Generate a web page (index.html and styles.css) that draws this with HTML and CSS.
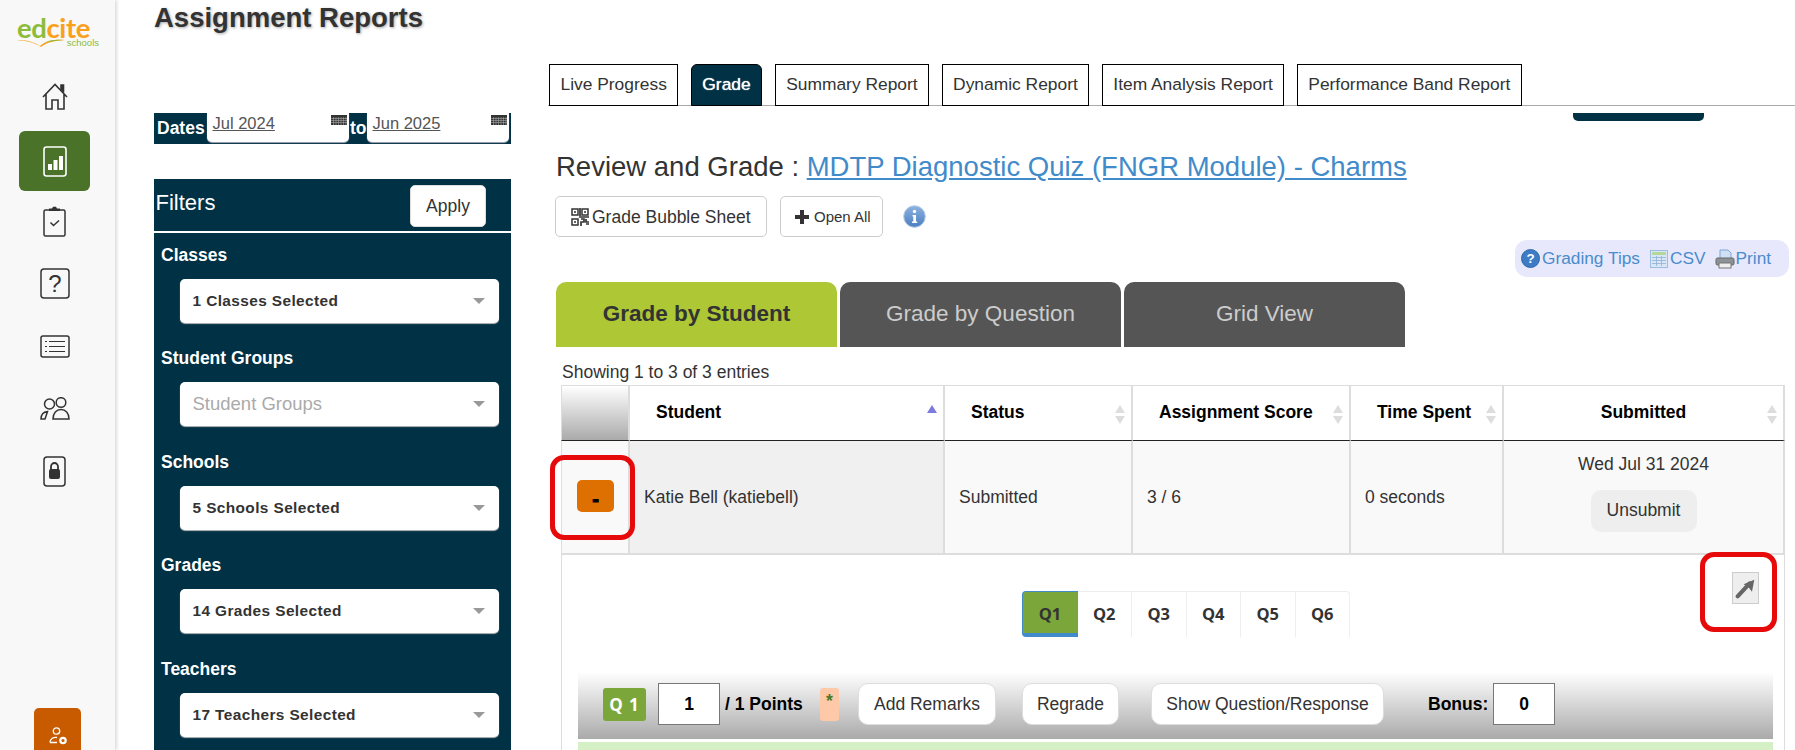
FILE: index.html
```html
<!DOCTYPE html>
<html lang="en">
<head>
<meta charset="utf-8">
<title>Assignment Reports</title>
<link rel="stylesheet" href="styles.css">
</head>
<body>
<svg class="defs" width="0" height="0" aria-hidden="true">
  <symbol id="cal" viewBox="0 0 16 10">
    <rect width="16" height="10" fill="#333"/>
    <path d="M0 3.5h16M0 5.5h16M0 7.5h16M2.5 2v8M5 2v8M7.500 2v8M10 2v8M12.500 2v8M15 2v8" stroke="#aaa" stroke-width=".6" fill="none"/>
  </symbol>
</svg>
<aside class="sidebar">
  <div class="logo">
    <div class="logo-word"><span class="logo-ed">ed</span><span class="logo-cite">cite</span></div>
    <div class="logo-foot">
      <svg class="logo-book" viewBox="0 0 48 8"><path d="M0 1c8 0 16 1 23 6C28 2 38 0 48 1 38 2 30 3 24 8 17 3 8 2 0 1z" fill="#f9a11b"/><path d="M26 4c6-3 13-4 20-3-7 1-14 1-20 3z" fill="#8dbb3a"/></svg>
      <span class="logo-schools">schools</span>
    </div>
  </div>
  <svg class="nav-icon nav-home" viewBox="0 0 26 27" fill="none" stroke="#333" stroke-width="1.6"><path d="M1 14 13 1.500 25 14M4 11v15h6V17h6v9h6V11"/><path d="M19 7V2h2.500v7.500" fill="#333"/></svg>
  <div class="nav-active">
    <svg class="nav-icon-chart" viewBox="0 0 24 31" fill="none"><rect x="1" y="1" width="22" height="29" rx="2.500" stroke="#fff" stroke-width="1.600"/><rect x="5" y="18" width="4" height="6" fill="#fff"/><rect x="10.500" y="14" width="4" height="10" fill="#fff"/><rect x="16" y="10" width="4" height="14" fill="#fff"/></svg>
  </div>
  <svg class="nav-icon nav-clip" viewBox="0 0 23 31" fill="none" stroke="#333" stroke-width="1.500"><path d="M6 4H2.500C1.500 4 1 4.500 1 5.500V28.500C1 29.500 1.500 30 2.500 30H20.500C21.500 30 22 29.500 22 28.500V5.500C22 4.500 21.500 4 20.500 4H17"/><path d="M6 5V2.500h3L10 .8h3l1 1.700h3V5z" fill="#333" stroke="none"/><path d="m7.500 16.500 3 3 5.500-5"/></svg>
  <svg class="nav-icon nav-q" viewBox="0 0 30 31" fill="none"><rect x="1" y="1" width="28" height="29" rx="3" stroke="#333" stroke-width="1.500"/><text x="15" y="24" text-anchor="middle" class="nav-q-mark">?</text></svg>
  <svg class="nav-icon nav-list" viewBox="0 0 30 23" fill="none" stroke="#333"><rect x="1" y="1" width="28" height="21" rx="2" stroke-width="1.500"/><path d="M9 6.500h16M9 11.500h16M9 16.500h16M5 6.500h2M5 11.500h2M5 16.500h2" stroke-width="1.200"/></svg>
  <svg class="nav-icon nav-people" viewBox="0 0 30 23" fill="none" stroke="#333" stroke-width="1.500"><circle cx="9.500" cy="7" r="5"/><circle cx="21" cy="5.500" r="4.800"/><path d="M13 22c0-6 3.500-9.500 8-9.500s8 3.500 8 9.500zM1 22c0-4 2-7 6.500-7.500L5 22z"/></svg>
  <svg class="nav-icon nav-lock" viewBox="0 0 23 31" fill="none"><rect x="1" y="1" width="21" height="29" rx="3" stroke="#333" stroke-width="1.500"/><rect x="6" y="13" width="11" height="10" rx="2" fill="#333"/><path d="M8 14v-3.500a3.500 3.500 0 0 1 7 0V14" stroke="#333" stroke-width="1.800"/></svg>
  <div class="nav-user">
    <svg class="nav-user-icon" viewBox="0 0 18 18" fill="none" stroke="#fff" stroke-width="1.300"><circle cx="7.500" cy="4" r="3.200"/><path d="M1 15.500c0-3.500 3-5.500 7-5M1 15.500h7"/><circle cx="14" cy="13.500" r="2.700" stroke-width="2.200"/></svg>
  </div>
</aside>

<main class="main">
  <section class="left">
    <h1 class="page-title">Assignment Reports</h1>
    <div class="dates">
      <b class="dates-label">Dates</b>
      <div class="date-input"><span class="date-value">Jul 2024</span><svg class="cal"><use href="#cal"/></svg></div>
      <b class="dates-to">to</b>
      <div class="date-input"><span class="date-value">Jun 2025</span><svg class="cal"><use href="#cal"/></svg></div>
    </div>
    <div class="filters">
      <div class="filters-head"><span class="filters-title">Filters</span><button class="apply">Apply</button></div>
      <div class="field"><label class="field-label">Classes</label><div class="select">1 Classes Selected</div></div>
      <div class="field"><label class="field-label">Student Groups</label><div class="select select-empty">Student Groups</div></div>
      <div class="field"><label class="field-label">Schools</label><div class="select">5 Schools Selected</div></div>
      <div class="field"><label class="field-label">Grades</label><div class="select">14 Grades Selected</div></div>
      <div class="field"><label class="field-label">Teachers</label><div class="select">17 Teachers Selected</div></div>
    </div>
  </section>

  <section class="right">
    <nav class="tabs">
      <a class="tab">Live Progress</a>
      <a class="tab tab-on">Grade</a>
      <a class="tab">Summary Report</a>
      <a class="tab">Dynamic Report</a>
      <a class="tab">Item Analysis Report</a>
      <a class="tab">Performance Band Report</a>
    </nav>
    <div class="stub"></div>
    <h2 class="review">Review and Grade : <a class="review-link">MDTP Diagnostic Quiz (FNGR Module) - Charms</a></h2>
    <div class="actions">
      <button class="act act-bubble">
        <svg class="qr" viewBox="0 0 18 18" fill="none" stroke="#333" stroke-width="1.500"><rect x="1" y="1" width="6" height="6"/><rect x="11" y="1" width="6" height="6"/><rect x="1" y="11" width="6" height="6"/><path d="M3 3.200h2v1.600H3zM13 3.200h2v1.600h-2zM3 13.200h2v1.600H3z" fill="#333" stroke="none"/><path d="M9 0v8M8 9h10M10 11h3v3h-3v4M15 11v3h3M15 16h3" stroke-width="1.700"/></svg>
        Grade Bubble Sheet
      </button>
      <button class="act act-open"><span class="plus"></span>Open All</button>
      <svg class="info" viewBox="0 0 23 23"><defs><linearGradient id="ig" x1="0" y1="0" x2="0" y2="1"><stop offset="0" stop-color="#8db3e0"/><stop offset="1" stop-color="#4a7fc0"/></linearGradient></defs><circle cx="11.500" cy="11.500" r="10.800" fill="url(#ig)" stroke="#b9cde6"/><circle cx="11.500" cy="6.500" r="1.700" fill="#fff"/><path d="M9.500 10h3.500v6.500h1.200V18H9v-1.500h1.300v-5H9.500z" fill="#fff"/></svg>
    </div>
    <div class="tools-row">
      <div class="tools">
        <svg class="tool-help" viewBox="0 0 20 20"><circle cx="10" cy="10" r="9.500" fill="#3d7cc4" stroke="#2f68ab"/><text x="10" y="15" text-anchor="middle" class="tool-help-mark">?</text></svg>
        <a class="tool-link">Grading Tips</a>
        <svg class="tool-csv" viewBox="0 0 18 18"><rect x=".5" y=".5" width="17" height="17" fill="#d8e6f5" stroke="#9dbde0"/><rect x="2" y="2" width="14" height="3" fill="#b6d79a"/><path d="M2 7.500h14M2 10.500h14M2 13.500h14M6.500 6v10M11.500 6v10" stroke="#8fb0d4" stroke-width=".8"/></svg>
        <a class="tool-link">CSV</a>
        <svg class="tool-print" viewBox="0 0 20 20"><path d="M5 1h8l3 3v6H5z" fill="#cfe0f4" stroke="#7fa5d3"/><rect x="1" y="9" width="18" height="7" rx="1.500" fill="#8d9296" stroke="#666"/><rect x="4" y="14" width="12" height="5" fill="#eee" stroke="#777"/></svg>
        <a class="tool-link">Print</a>
      </div>
    </div>
    <div class="grade-tabs">
      <a class="gtab gtab-on">Grade by Student</a>
      <a class="gtab">Grade by Question</a>
      <a class="gtab">Grid View</a>
    </div>
    <p class="showing">Showing 1 to 3 of 3 entries</p>

    <div class="report">
      <table class="report-table">
        <thead>
          <tr>
            <th class="c-toggle th-toggle"></th>
            <th class="c-student"><span class="th-text">Student</span><i class="sort sort-asc"></i></th>
            <th class="c-status"><span class="th-text">Status</span><i class="sort"></i></th>
            <th class="c-score"><span class="th-text">Assignment Score</span><i class="sort"></i></th>
            <th class="c-time"><span class="th-text">Time Spent</span><i class="sort"></i></th>
            <th class="c-sub th-center">Submitted<i class="sort"></i></th>
          </tr>
        </thead>
        <tbody>
          <tr>
            <td class="td-toggle"><button class="toggle">-</button></td>
            <td class="td-student">Katie Bell (katiebell)</td>
            <td>Submitted</td>
            <td>3 / 6</td>
            <td>0 seconds</td>
            <td class="td-sub"><div class="sub-date">Wed Jul 31 2024</div><button class="unsubmit">Unsubmit</button></td>
          </tr>
        </tbody>
      </table>
      <div class="expanded">
        <div class="qtabs">
          <a class="qtab qtab-on">Q1</a><a class="qtab">Q2</a><a class="qtab">Q3</a><a class="qtab">Q4</a><a class="qtab">Q5</a><a class="qtab">Q6</a>
        </div>
        <div class="gradebar">
          <span class="q-badge">Q 1</span>
          <span class="score-box">1</span>
          <b class="points">/ 1 Points</b>
          <span class="star">*</span>
          <button class="pill pill-add">Add Remarks</button>
          <button class="pill pill-regrade">Regrade</button>
          <button class="pill pill-show">Show Question/Response</button>
          <b class="bonus-label">Bonus:</b>
          <span class="score-box bonus-box">0</span>
        </div>
        <div class="green-strip"></div>
        <button class="popout"><svg viewBox="0 0 27 32" class="popout-icon"><path d="M5 25 18 11" stroke="#666" stroke-width="4.500" stroke-linecap="round"/><path d="M23 7 20.500 20 17 15.500 11.500 12z" fill="#666"/></svg></button>
      </div>
      <div class="mark mark-toggle"></div>
      <div class="mark mark-popout"></div>
    </div>
  </section>
</main>
</body>
</html>
```

FILE: styles.css
```css
* { box-sizing: border-box; }
html, body { margin: 0; height: 750px; overflow: hidden; }
body {
  display: flex;
  background: #fff;
  color: #333;
  font: 17.5px/20px "Liberation Sans", Arial, sans-serif;
}
button { font: inherit; color: inherit; cursor: pointer; }
.defs { position: absolute; }

/* sidebar */
.sidebar {
  flex: 0 0 115px;
  height: 750px;
  display: flex;
  flex-direction: column;
  align-items: center;
  padding: 15px 6px 0 0;
  background: #f8f8f8;
  box-shadow: 2px 0 3px #ddd;
  overflow: hidden;
}
.logo { flex: none; width: 82px; height: 32px; margin-left: 7px; }
.logo-word { height: 25px; font: 700 27.500px/25px Lato, sans-serif; letter-spacing: -.4px; white-space: nowrap; }
.logo-ed { color: #8dbb3a; }
.logo-cite { color: #f9a11b; }
.logo-foot { display: flex; align-items: flex-end; justify-content: space-between; height: 7px; }
.logo-book { width: 48px; height: 8px; }
.logo-schools { font: 9.500px/9px "Liberation Sans", sans-serif; color: #8dbb3a; }
.nav-icon { display: block; flex: none; }
.nav-home { width: 26px; height: 27px; margin-top: 36px; }
.nav-active {
  flex: none;
  width: 71px;
  height: 60px;
  margin-top: 21px;
  display: flex;
  align-items: center;
  justify-content: center;
  background: #4a7229;
  border-radius: 6px;
}
.nav-icon-chart { width: 24px; height: 31px; }
.nav-clip { width: 23px; height: 31px; margin-top: 15px; }
.nav-q { width: 30px; height: 31px; margin-top: 31px; }
.nav-q-mark { font: 24px "Liberation Sans", sans-serif; fill: #333; }
.nav-list { width: 30px; height: 23px; margin-top: 36px; }
.nav-people { width: 30px; height: 23px; margin-top: 39px; }
.nav-lock { width: 23px; height: 31px; margin-top: 36px; }
.nav-user {
  flex: none;
  width: 47px;
  height: 42px;
  margin: auto 0 0 6px;
  padding: 19px 0 0 15px;
  background: #c85a00;
  border-radius: 5px 5px 0 0;
}
.nav-user-icon { display: block; width: 18px; height: 18px; }

/* main */
.main { flex: 1; display: flex; min-width: 0; height: 750px; padding-left: 39px; }
.left { display: flex; flex-direction: column; flex: 0 0 357px; height: 750px; }
.right { flex: 1; min-width: 0; height: 750px; margin-left: 37px; }

.page-title {
  margin: 0;
  font-size: 27.500px;
  line-height: 36px;
  font-weight: 700;
  text-shadow: 1px 1px 3px #aaa;
}
.dates {
  display: flex;
  flex: none;
  height: 31px;
  margin-top: 77px;
  padding-right: 2px;
  background: #003145;
  color: #fff;
}
.dates-label { width: 53px; padding: 5px 0 0 3px; }
.dates-to { width: 18px; padding: 5px 0 0 1px; }
.date-input {
  display: flex;
  justify-content: space-between;
  width: 142px;
  height: 28.500px;
  padding: 0 2px 0 5.500px;
  background: #fff;
  border-radius: 0 0 5px 5px;
  box-shadow: 0 1px 1px #aab;
  color: #555;
  font-size: 16.500px;
}
.date-value { text-decoration: underline; }
.cal { width: 16px; height: 10px; margin-top: 2px; }

.filters { flex: 1; min-height: 0; margin-top: 35px; background: #003145; color: #fff; }
.filters-head {
  display: flex;
  align-items: center;
  justify-content: space-between;
  height: 54px;
  padding: 0 25px 0 1.500px;
  border-bottom: 2px solid #fff;
}
.filters-title { margin-bottom: 5px; font-size: 22px; line-height: 30px; }
.apply {
  width: 76px;
  height: 42px;
  margin-top: 2px;
  padding: 0;
  background: #fff;
  border: 1px solid #ddd;
  border-radius: 5px;
  color: #333;
}
.field { padding: 12px 12.500px 13.400px 7px; }
.field:last-child { padding-bottom: 0; }
.field-label { display: block; font-weight: 700; line-height: 20px; }
.select {
  position: relative;
  height: 44px;
  margin: 14px 0 0 18.500px;
  padding-left: 13px;
  background: #fff;
  border-radius: 5px;
  box-shadow: 0 1px 1px #bbb;
  color: #333;
  font-size: 15.400px;
  font-weight: 700;
  letter-spacing: .4px;
  line-height: 43px;
}
.select::after {
  content: "";
  position: absolute;
  right: 13.500px;
  top: 19px;
  border: solid transparent;
  border-width: 6px 6px 0;
  border-top-color: #999;
}
.select-empty { color: #aaa; font-size: 18.500px; font-weight: 400; letter-spacing: 0; }

/* tabs */
.tabs {
  display: flex;
  gap: 12.500px;
  height: 42px;
  margin-top: 64px;
  padding-left: 1px;
  border-bottom: 1px solid #aaa;
  font-size: 17.400px;
}
.tab {
  height: 42px;
  padding: 9px 10.500px 0;
  background: #fff;
  border: 1px solid #000;
}
.tab-on {
  background: #003145;
  border-radius: 6px 6px 0 0;
  color: #fff;
  text-shadow: 0 0 1px #fff;
}
.stub {
  width: 131px;
  height: 8px;
  margin: 7px 0 0 1025px;
  background: #003145;
  border-radius: 0 0 5px 5px;
}
.review {
  margin: 26px 0 0 8px;
  font-size: 27.500px;
  font-weight: 400;
  line-height: 40px;
}
.review-link { color: #428bca; text-decoration: underline; }
.actions { display: flex; align-items: center; height: 41px; margin: 9px 0 0 7px; }
.act {
  display: flex;
  align-items: center;
  height: 41px;
  padding: 0;
  background: #fff;
  border: 1px solid #ccc;
  border-radius: 5px;
}
.act-bubble { width: 212px; padding-left: 15px; gap: 3px; }
.act-open { width: 103px; margin-left: 13px; padding-left: 14px; font-size: 15px; }
.qr { width: 18px; height: 18px; }
.plus {
  width: 14px;
  height: 14px;
  margin-right: 5px;
  background:
    linear-gradient(#333, #333) center / 14px 4px no-repeat,
    linear-gradient(#333, #333) center / 4px 14px no-repeat;
}
.info { width: 23px; height: 23px; margin-left: 20px; }
.tools-row { display: flex; justify-content: flex-end; margin: 3px 6px 0 0; }
.tools {
  display: flex;
  align-items: center;
  width: 274px;
  height: 37px;
  padding: 0 0 1px 6px;
  background: #e8e8fc;
  border-radius: 12px;
  font-size: 17.300px;
}
.tool-link { color: #4a8ccc; }
.tool-help { width: 19px; height: 19px; margin: 1px 2px 0 0; }
.tool-help-mark { font: 700 14px "Liberation Sans", sans-serif; fill: #fff; }
.tool-csv { width: 18px; height: 18px; margin: 1px 2px 0 10px; }
.tool-print { width: 20px; height: 20px; margin: 1px 1px 0 9px; }

.grade-tabs { display: flex; gap: 3px; margin: 5px 0 0 8px; }
.gtab {
  width: 281px;
  height: 65px;
  background: #555;
  border-radius: 10px 10px 0 0;
  color: #ccc;
  font-size: 22.500px;
  line-height: 64px;
  text-align: center;
}
.gtab-on { background: #aec735; color: #333; font-weight: 700; }
.showing { margin: 15px 0 0 14px; line-height: 20px; }

/* table */
.report { position: relative; width: 1224px; margin: 3px 0 0 13px; }
.report-table { width: 1224px; table-layout: fixed; border-collapse: separate; border-spacing: 0; }
.c-toggle { width: 69px; }
.c-student { width: 315px; }
.c-status { width: 188px; }
.c-score { width: 218px; }
.c-time { width: 153px; }
.c-sub { width: 281px; }
.report-table th {
  position: relative;
  height: 56px;
  padding: 0 0 2px 26px;
  border-top: 1px solid #ddd;
  border-right: 2px solid #ddd;
  border-bottom: 1px solid #222;
  color: #000;
  font-weight: 700;
  text-align: left;
}
.report-table .th-toggle {
  padding: 0;
  border-left: 1px solid #ddd;
  background: linear-gradient(#fff, #aaa);
}
.report-table .th-center { padding-left: 0; text-align: center; }
.sort { position: absolute; right: 6px; top: 19px; width: 10px; height: 19px; }
.sort::before, .sort::after {
  content: "";
  position: absolute;
  left: 0;
  border: solid transparent;
  border-width: 0 5px;
}
.sort::before { top: 0; border-bottom: 8px solid #ddd; }
.sort::after { bottom: 0; border-top: 8px solid #ddd; }
.sort-asc::before { border-bottom-color: #7b7bdc; }
.sort-asc::after { display: none; }
.report-table td {
  height: 114px;
  padding: 0 0 0 14px;
  background: #f9f9f9;
  border-right: 2px solid #ddd;
  border-bottom: 2px solid #ddd;
}
.report-table .td-toggle { padding: 0 0 0 15px; border-left: 1px solid #ddd; }
.report-table .td-student { background: #f0f0f0; }
.report-table .td-sub { padding: 13px 0 0; text-align: center; vertical-align: top; }
.toggle {
  display: block;
  width: 37px;
  height: 32px;
  margin-top: -2px;
  padding: 5px 0 0;
  background: #dd7000;
  border: 0;
  border-radius: 5px;
  color: #000;
  font-size: 20px;
  font-weight: 700;
  -webkit-text-stroke: 1px #000;
}
.sub-date { line-height: 20px; }
.unsubmit {
  width: 106px;
  height: 42px;
  margin-top: 16px;
  padding: 0 0 2px;
  background: #eee;
  border: 0;
  border-radius: 10px;
}

/* expanded row */
.expanded {
  position: relative;
  height: 195px;
  padding: 36px 11.400px 0 15.500px;
  border: solid #ddd;
  border-width: 0 1px;
  overflow: hidden;
}
.qtabs { display: flex; margin-left: 444px; }
.qtab {
  width: 54.500px;
  height: 46px;
  border: solid #eee;
  border-width: 1px 1px 0 0;
  color: #333;
  font: 700 16.500px/44px "Open Sans", sans-serif;
  text-align: center;
}
.qtab:last-child { border-radius: 0 4px 0 0; }
.qtab-on {
  width: 56px;
  background: #7ba63a;
  border: solid #428bca;
  border-width: 1px 0 4px 1px;
  border-radius: 4px 0 0 4px;
}
.gradebar {
  display: flex;
  align-items: center;
  height: 67px;
  margin-top: 35px;
  padding: 0 0 3px 25.500px;
  background: linear-gradient(#fff, #aaa);
}
.q-badge {
  width: 43px;
  height: 33px;
  background: #7ba63a;
  border-radius: 3px;
  color: #fff;
  font: 700 17px/33px "Open Sans", sans-serif;
  letter-spacing: 1px;
  text-align: center;
}
.score-box {
  width: 62px;
  height: 42px;
  margin-left: 12px;
  background: #fff;
  border: 1px solid #777;
  color: #000;
  font-weight: 700;
  line-height: 40px;
  text-align: center;
}
.points { width: 77px; margin-left: 5px; color: #000; white-space: nowrap; }
.star {
  width: 19px;
  height: 33px;
  margin-left: 18px;
  background: #fdc9a8;
  border-radius: 3px;
  color: #4a7a2a;
  font-weight: 700;
  line-height: 27px;
  text-align: center;
}
.pill {
  height: 42px;
  padding: 0;
  background: #fff;
  border: 1px solid #ddd;
  border-radius: 10px;
}
.pill-add { width: 138px; margin-left: 19px; }
.pill-regrade { width: 97px; margin-left: 26px; }
.pill-show { width: 233px; margin-left: 32px; }
.bonus-label { width: 59px; margin-left: 44px; color: #000; }
.bonus-box { margin-left: 6px; }
.green-strip { height: 8px; margin-top: 3px; background: #d5f0c5; }
.popout {
  position: absolute;
  left: 1170px;
  top: 17px;
  width: 27px;
  height: 32px;
  padding: 0;
  background: #eee;
  border: 1px solid #ccc;
}
.popout-icon { display: block; width: 25px; height: 30px; }

/* red annotations */
.mark { position: absolute; border: 5px solid #e60a0a; border-radius: 14px; pointer-events: none; }
.mark-toggle { left: -11px; top: 70px; width: 85px; height: 85px; }
.mark-popout { left: 1139px; top: 167px; width: 77px; height: 80px; }
```
